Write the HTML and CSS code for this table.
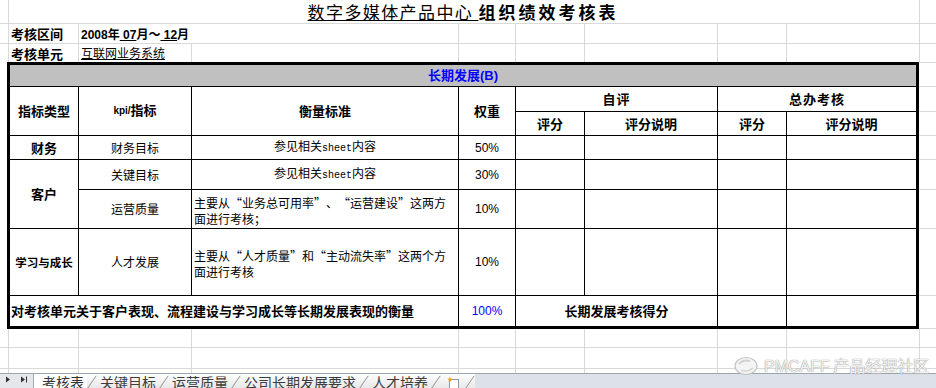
FILE: index.html
```html
<!DOCTYPE html>
<html lang="zh-CN">
<head>
<meta charset="utf-8">
<title>组织绩效考核表</title>
<link rel="stylesheet" href="styles.css">
</head>
<body>
<div class="sheet">
  <div class="grid top">
    <div class="c"></div>
    <div class="c title span8"><span class="t1">数字多媒体产品中心 </span><span class="t2">组织绩效考核表</span></div>
    <div class="c gut"></div>

    <div class="c"></div>
    <div class="c lbl">考核区间</div>
    <div class="c val span2"><span class="lat">2008</span>年<span class="u lat"> 07</span>月～<span class="u lat"> 12</span>月</div>
    <div class="c"></div><div class="c"></div><div class="c"></div><div class="c"></div><div class="c"></div>
    <div class="c gut"></div>

    <div class="c nb"></div>
    <div class="c nb lbl">考核单元</div>
    <div class="c nb val2"><span class="u">互联网业务系统</span></div>
    <div class="c nb"></div><div class="c nb"></div><div class="c nb"></div><div class="c nb"></div><div class="c nb"></div><div class="c nb"></div>
    <div class="c nb gut"></div>
  </div>

  <table class="main">
    <colgroup>
      <col class="w7"><col class="w72"><col class="w113"><col class="w267"><col class="w57"><col class="w69"><col class="w133"><col class="w69"><col class="w132"><col class="w17">
    </colgroup>
    <tr class="h25">
      <td class="g"></td>
      <td colspan="8" class="band L R T">长期发展<span class="lat">(B)</span></td>
      <td class="gr gt"></td>
    </tr>
    <tr class="h25">
      <td class="g"></td>
      <td rowspan="2" class="L hd">指标类型</td>
      <td rowspan="2" class="hd"><span class="kpi">kpi/</span>指标</td>
      <td rowspan="2" class="hd">衡量标准</td>
      <td rowspan="2" class="hd">权重</td>
      <td colspan="2" class="hd ls">自评</td>
      <td colspan="2" class="hd ls R">总办考核</td>
      <td class="gr"></td>
    </tr>
    <tr class="h24">
      <td class="g"></td>
      <td class="hd">评分</td>
      <td class="hd">评分说明</td>
      <td class="hd">评分</td>
      <td class="hd R">评分说明</td>
      <td class="gr"></td>
    </tr>
    <tr class="h24">
      <td class="g"></td>
      <td class="L hd">财务</td>
      <td>财务目标</td>
      <td>参见相关<span class="mono">sheet</span>内容</td>
      <td class="pct">50%</td>
      <td></td><td></td><td></td><td class="R"></td>
      <td class="gr"></td>
    </tr>
    <tr class="h30">
      <td class="g"></td>
      <td rowspan="2" class="L hd">客户</td>
      <td>关键目标</td>
      <td>参见相关<span class="mono">sheet</span>内容</td>
      <td class="pct">30%</td>
      <td></td><td></td><td></td><td class="R"></td>
      <td class="gr"></td>
    </tr>
    <tr class="h39">
      <td class="g"></td>
      <td>运营质量</td>
      <td class="desc">主要从<span class="ql">“</span>业务总可用率<span class="qr">”</span>、<span class="ql">“</span>运营建设<span class="qr">”</span>这两方<br>面进行考核；</td>
      <td class="pct">10%</td>
      <td></td><td></td><td></td><td class="R"></td>
      <td class="gr"></td>
    </tr>
    <tr class="h67">
      <td class="g"></td>
      <td class="L hd small">学习与成长</td>
      <td>人才发展</td>
      <td class="desc">主要从<span class="ql">“</span>人才质量<span class="qr">”</span>和<span class="ql">“</span>主动流失率<span class="qr">”</span>这两个方<br>面进行考核</td>
      <td class="pct">10%</td>
      <td></td><td></td><td></td><td class="R"></td>
      <td class="gr"></td>
    </tr>
    <tr class="h33">
      <td class="g"></td>
      <td colspan="3" class="L B hd sum">对考核单元关于客户表现、流程建设与学习成长等长期发展表现的衡量</td>
      <td class="pct blue B">100%</td>
      <td colspan="2" class="hd B">长期发展考核得分</td>
      <td class="B"></td>
      <td class="B R"></td>
      <td class="gr"></td>
    </tr>
  </table>

  <div class="grid bottom">
    <div class="c"></div><div class="c"></div><div class="c"></div><div class="c"></div><div class="c"></div><div class="c"></div><div class="c"></div><div class="c"></div><div class="c"></div><div class="c gut"></div>
    <div class="c"></div><div class="c"></div><div class="c"></div><div class="c"></div><div class="c"></div><div class="c"></div><div class="c"></div><div class="c"></div><div class="c"></div><div class="c gut"></div>
    <div class="c nb"></div><div class="c nb"></div><div class="c nb"></div><div class="c nb"></div><div class="c nb"></div><div class="c nb"></div><div class="c nb"></div><div class="c nb"></div><div class="c nb"></div><div class="c nb gut"></div>
  </div>

  <div class="tabbar">
    <div class="nav">
      <svg width="33" height="14" viewBox="0 0 33 14">
        <path d="M6 2.5 L10 5.5 L6 8.5 Z" fill="#333"/>
        <path d="M21 2.5 L25 5.5 L21 8.5 Z" fill="#333"/>
        <rect x="26" y="2.5" width="1" height="6" fill="#333"/>
      </svg>
    </div>
    <div class="tabs">
      <span class="tab active">考核表</span>
      <svg class="sep" viewBox="0 0 10 15"><path d="M0.5 15 L9.5 2" stroke="#8c8c8c" fill="none"/></svg>
      <span class="tab">关键目标</span>
      <svg class="sep" viewBox="0 0 10 15"><path d="M0.5 15 L9.5 2" stroke="#8c8c8c" fill="none"/></svg>
      <span class="tab">运营质量</span>
      <svg class="sep" viewBox="0 0 10 15"><path d="M0.5 15 L9.5 2" stroke="#8c8c8c" fill="none"/></svg>
      <span class="tab">公司长期发展要求</span>
      <svg class="sep" viewBox="0 0 10 15"><path d="M0.5 15 L9.5 2" stroke="#8c8c8c" fill="none"/></svg>
      <span class="tab">人才培养</span>
      <svg class="sep" viewBox="0 0 10 15"><path d="M0.5 15 L9.5 2" stroke="#8c8c8c" fill="none"/></svg>
      <span class="tab icon">
        <svg width="14" height="14" viewBox="0 0 14 14">
          <rect x="3.5" y="4.5" width="9" height="9" fill="#fff" stroke="#8a9bb0"/>
          <path d="M4 2 L4.8 3.5 L6.5 3.8 L5.2 5 L5.5 6.8 L4 6 L2.5 6.8 L2.8 5 L1.5 3.8 L3.2 3.5 Z" fill="#f0a020"/>
        </svg>
      </span>
      <svg class="sep" viewBox="0 0 10 15"><path d="M0.5 15 L9.5 2" stroke="#8c8c8c" fill="none"/></svg>
    </div>
  </div>

  <div class="wm">
    <svg width="26" height="20" viewBox="0 0 26 20">
      <ellipse cx="13" cy="10" rx="11" ry="8.5" fill="#f4f4f4" stroke="#c4c4c4" stroke-width="1.2"/>
      <path d="M6 8 Q10 3 17 5" stroke="#d0d0d0" stroke-width="2" fill="none"/>
      <path d="M8 14 Q14 17 20 12" stroke="#cfcfcf" stroke-width="1.2" fill="none"/>
    </svg>
    <span class="wmtext"><span class="lat">PMCAFF</span> 产品经理社区</span>
  </div>
</div>
</body>
</html>
```

FILE: styles.css
```css
* {
  box-sizing: border-box;
  margin: 0;
  padding: 0;
}

html, body {
  width: 936px;
  height: 388px;
  overflow: hidden;
  background: #fff;
}

body {
  font-family: "Noto Sans CJK SC", sans-serif;
  font-size: 12px;
  color: #000;
}

.sheet {
  position: relative;
  width: 936px;
  height: 388px;
  display: flex;
  flex-direction: column;
}

.lat {
  font-family: "Liberation Sans", Arial, sans-serif;
}

.u {
  text-decoration: underline;
}

/* spreadsheet grid areas */
.grid {
  display: grid;
  grid-template-columns: 9px 70px 113px 267px 57px 69px 133px 69px 133px 16px;
}

.top {
  grid-template-rows: 24px 20px 18px;
}

.bottom {
  grid-template-rows: 19px 21px 4px;
}

.c {
  border-right: 1px solid #d9d9d9;
  border-bottom: 1px solid #d9d9d9;
  white-space: nowrap;
  overflow: visible;
}

.c.gut {
  border-right: 0;
}

.c.nb {
  border-bottom: 0;
}

.span8 {
  grid-column: span 8;
}

.span2 {
  grid-column: span 2;
}

.title {
  text-align: center;
  font-size: 17px;
  line-height: 23px;
  padding-right: 2px;
}

.t1 {
  text-decoration: underline;
  letter-spacing: 1.4px;
  font-weight: 400;
}

.t2 {
  font-weight: 700;
  letter-spacing: 3px;
}

.lbl {
  font-weight: 700;
  font-size: 13px;
  line-height: 19px;
  padding-left: 2px;
}

.val {
  font-weight: 700;
  font-size: 12px;
  line-height: 19px;
  padding-left: 2px;
}

.val2 {
  font-size: 12px;
  line-height: 18px;
  padding-left: 2px;
}

/* main table */
.main {
  border-collapse: separate;
  border-spacing: 0;
  table-layout: fixed;
  width: 936px;
  flex: none;
}

.w7 { width: 7px; }
.w72 { width: 72px; }
.w113 { width: 113px; }
.w267 { width: 267px; }
.w57 { width: 57px; }
.w69 { width: 69px; }
.w133 { width: 133px; }
.w132 { width: 132px; }
.w17 { width: 17px; }

.h24 { height: 24px; }
.h25 { height: 25px; }
.h30 { height: 30px; }
.h33 { height: 33px; }
.h39 { height: 39px; }
.h67 { height: 67px; }

.main td {
  border-right: 1px solid #000;
  border-bottom: 1px solid #000;
  padding: 0 1px;
  text-align: center;
  vertical-align: middle;
  line-height: 14px;
  white-space: nowrap;
  font-size: 12px;
}

.main td.g {
  border: 0;
}

.main td.gr {
  border: 0;
  border-bottom: 1px solid #d9d9d9;
}

.main td.gt {
  border-top: 1px solid #d9d9d9;
}

.main td.L { border-left: 3px solid #000; }
.main td.R { border-right: 3px solid #000; }
.main td.T { border-top: 3px solid #000; }
.main td.B { border-bottom: 3px solid #000; }

.main td.band {
  background: #c0c0c0;
  color: #0000ff;
  font-weight: 700;
  font-size: 13px;
}

.main td.hd {
  font-weight: 700;
  font-size: 13px;
}

.main td.small {
  font-size: 11.5px;
}

.main td.ls {
  letter-spacing: 1px;
}

.kpi {
  font-family: "Liberation Sans", Arial, sans-serif;
  font-size: 10px;
  position: relative;
  top: -1px;
}

.mono {
  font-family: "Liberation Mono", monospace;
  font-size: 10px;
}

.main td.pct {
  font-family: "Liberation Sans", Arial, sans-serif;
  font-size: 12px;
}

.main td.blue {
  color: #0000ff;
}

.main td.desc {
  text-align: left;
  line-height: 16px;
  padding: 3px 1px 0 2px;
}

.ql,
.qr {
  display: inline-block;
  width: 12px;
}

.ql {
  text-align: right;
}

.qr {
  text-align: left;
}

.main td.sum {
  text-align: left;
  padding-left: 1px;
}

/* sheet tabs */
.tabbar {
  display: flex;
  height: 15px;
  border-top: 1px solid #9da4ae;
  background: #dde1e8;
  overflow: hidden;
  flex: none;
}

.nav {
  width: 34px;
  flex: none;
  border-right: 1px solid #a6abb3;
  background: #e4e7ec;
}

.nav svg {
  display: block;
}

.tabs {
  display: flex;
  align-items: flex-start;
  height: 14px;
}

.tab {
  flex: none;
  font-size: 14px;
  line-height: 16px;
  height: 14px;
  padding: 0 3px;
  color: #3c3c3c;
  background: linear-gradient(#fdfdfd, #e8e8e8);
}

.tab.active {
  background: #fff;
  padding-left: 8px;
  color: #333;
}

.tab.icon {
  padding: 1px 5px 0;
}

.tab.icon svg {
  display: block;
}

.sep {
  flex: none;
  display: block;
  width: 10px;
  height: 14px;
  background: linear-gradient(#fdfdfd, #e8e8e8);
}

/* watermark overlay */
.wm {
  position: absolute;
  left: 733px;
  top: 356px;
  display: flex;
  align-items: center;
  gap: 5px;
}

.wm svg {
  display: block;
}

.wmtext {
  font-size: 16px;
  line-height: 18px;
  color: #f2f2f2;
  text-shadow: 0 0 1px #9a9a9a, 0 0 1px #9a9a9a;
  white-space: nowrap;
}
```
